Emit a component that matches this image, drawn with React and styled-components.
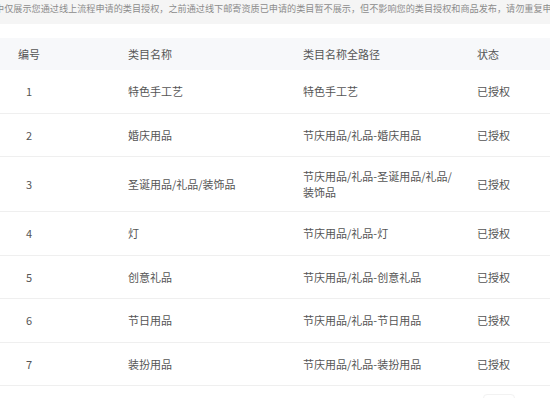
import styled, { createGlobalStyle } from 'styled-components'

const GlobalStyle = createGlobalStyle`
  body {
    margin: 0;
    background: #fff;
    font-family: "Microsoft YaHei", "Noto Sans CJK SC", "Liberation Sans", sans-serif;
    overflow: hidden;
  }
`

const Page = styled.div`
  width: 550px;
  height: 398px;
  overflow: hidden;
`

const Notice = styled.div`
  height: 24px;
  background: #f5f5f5;
  color: #8c8c8c;
  font-size: 9.15px;
  line-height: 16px;
  white-space: nowrap;
  overflow: hidden;
  text-indent: -5px;
`

const Table = styled.div`
  margin-top: 14px;
  display: flex;
  flex-direction: column;
`

const Row = styled.div`
  display: grid;
  grid-template-columns: 128px 175px 174px 1fr;
  align-items: center;
  min-height: ${p => (p.head ? '32px' : '42.5px')};
  background: ${p => (p.head ? '#f7f8fa' : '#fff')};
  border-bottom: ${p => (p.head ? 'none' : '1px solid #efefef')};
  color: #555;
  font-size: 11px;
  line-height: 16px;
`

const Cell = styled.div`
  padding: ${p => (p.head ? '0' : '11px')} 0;
  padding-left: ${p => p.indent || 0}px;
  padding-right: ${p => (p.wrap ? '22px' : '0')};
`

const Footer = styled.div`
  display: flex;
  justify-content: flex-end;
  padding: 8px 35px 0 0;
`

const PageBtn = styled.div`
  width: 30px;
  height: 20px;
  border: 1px solid #f2f2f2;
  border-radius: 4px;
`

const rows = [
  ['1', '特色手工艺', '特色手工艺'],
  ['2', '婚庆用品', '节庆用品/礼品-婚庆用品'],
  ['3', '圣诞用品/礼品/装饰品', '节庆用品/礼品-圣诞用品/礼品/装饰品'],
  ['4', '灯', '节庆用品/礼品-灯'],
  ['5', '创意礼品', '节庆用品/礼品-创意礼品'],
  ['6', '节日用品', '节庆用品/礼品-节日用品'],
  ['7', '装扮用品', '节庆用品/礼品-装扮用品'],
]

const App = () => {
  return (
    <>
      <GlobalStyle />
      <Page>
        <Notice>
          中仅展示您通过线上流程申请的类目授权，之前通过线下邮寄资质已申请的类目暂不展示，但不影响您的类目授权和商品发布，请勿重复申请
        </Notice>
        <Table>
          <Row head>
            <Cell head indent={18}>编号</Cell>
            <Cell head>类目名称</Cell>
            <Cell head>类目名称全路径</Cell>
            <Cell head>状态</Cell>
          </Row>
          {rows.map(r => (
            <Row key={r[0]}>
              <Cell indent={26}>{r[0]}</Cell>
              <Cell>{r[1]}</Cell>
              <Cell wrap>{r[2]}</Cell>
              <Cell>已授权</Cell>
            </Row>
          ))}
        </Table>
        <Footer>
          <PageBtn />
        </Footer>
      </Page>
    </>
  )
}

export default App
